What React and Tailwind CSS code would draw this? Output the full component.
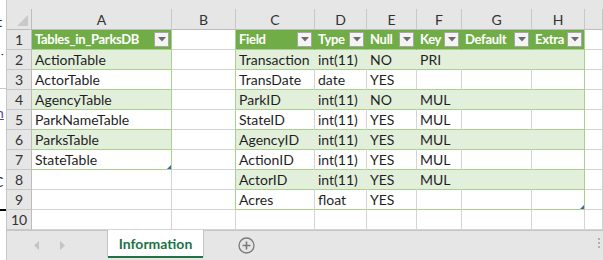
import React from "react";

const colLetters = ["A", "B", "C", "D", "E", "F", "G", "H", ""];

const tableA = ["Tables_in_ParksDB", "ActionTable", "ActorTable", "AgencyTable", "ParkNameTable", "ParksTable", "StateTable"];

const fields = [
  ["Field", "Type", "Null", "Key", "Default", "Extra"],
  ["Transaction", "int(11)", "NO", "PRI", "", ""],
  ["TransDate", "date", "YES", "", "", ""],
  ["ParkID", "int(11)", "NO", "MUL", "", ""],
  ["StateID", "int(11)", "YES", "MUL", "", ""],
  ["AgencyID", "int(11)", "YES", "MUL", "", ""],
  ["ActionID", "int(11)", "YES", "MUL", "", ""],
  ["ActorID", "int(11)", "YES", "MUL", "", ""],
  ["Acres", "float", "YES", "", "", ""],
];

function DropButton() {
  return (
    <span className="absolute right-[2px] top-[2px] z-20 flex h-[15px] w-[15px] items-center justify-center border border-[#a6a6a6] bg-[#f4f4f4]">
      <svg width="8" height="5" viewBox="0 0 8 5">
        <path d="M0 0 L8 0 L4 4.5 Z" fill="#6b6b6b" />
      </svg>
    </span>
  );
}

function Handle() {
  return (
    <svg className="absolute bottom-0 right-0" width="4" height="4" viewBox="0 0 4 4">
      <path d="M4 0 L4 4 L0 4 Z" fill="#4660b8" />
    </svg>
  );
}

function getCell(r, c) {
  // r: 1..10, c: 0..8
  const inA = c === 0 && r <= 7;
  const inC = c >= 2 && c <= 7 && r <= 9;
  const inTable = inA || inC;
  const header = inTable && r === 1;
  const band = inTable && r > 1 && r % 2 === 0;

  let text = "";
  if (inA) text = tableA[r - 1];
  if (inC) text = fields[r - 1][c - 2];

  let bg = "bg-white";
  if (header) bg = "bg-[#70ad47]";
  else if (band) bg = "bg-[#e2efda]";

  let bb = "border-b-[#d4d4d4]";
  if (inTable) bb = "border-b-[#a9d08e]";

  let br = "border-r-[#d4d4d4]";
  if ((c === 0 && r <= 7) || (c === 1 && r <= 9) || (c === 7 && r <= 9)) br = "border-r-[#a9d08e]";
  else if (header) br = "border-r-[#70ad47]";
  else if (band) br = "border-r-[#e2efda]";

  const handle = (c === 0 && r === 7) || (c === 7 && r === 9);

  return { text, header, cls: `${bg} ${bb} ${br}`, handle };
}

export default function App() {
  const rows = [1, 2, 3, 4, 5, 6, 7, 8, 9, 10];
  return (
    <div
      className="flex h-[260px] w-[603px] overflow-hidden bg-white text-[14px] text-[#1f1f1f]"
      style={{ fontFamily: "Lato, 'Liberation Sans', sans-serif" }}
    >
      {/* sliver of the window behind */}
      <div className="relative w-[6px] shrink-0 bg-white">
        <span className="absolute left-[-3px] top-[15px] text-[14px] leading-none text-[#222]">t</span>
        <span className="absolute left-[1px] top-[48px] text-[10px] leading-none text-[#222]">·</span>
        <div className="absolute left-0 top-[88px] h-px w-[6px] bg-[#c8c8c8]" />
        <span className="absolute left-[-4px] top-[106px] text-[14px] leading-none text-[#5b3f9e] underline">h</span>
        <span className="absolute left-[-6px] top-[175px] text-[14px] leading-none text-[#222]">C</span>
        <div className="absolute left-0 top-[209px] h-[2px] w-[6px] bg-black" />
      </div>

      <div className="flex min-w-0 flex-1 flex-col border-l border-[#c6c6c6] bg-[#e6e6e6]">
        <div className="h-[9px] shrink-0 bg-[#e6e6e6]" />
        <div className="grid grid-cols-[25px_140px_64px_79px_52px_50px_45px_70px_53px_1fr]">
          {/* column headers */}
          <div className="relative h-[21px] border-b border-r border-[#bcbcbc] bg-[#e6e6e6]">
            <svg className="absolute bottom-[3px] right-[3px]" width="11" height="11" viewBox="0 0 11 11">
              <path d="M11 0 L11 11 L0 11 Z" fill="#c9c9c9" />
            </svg>
          </div>
          {colLetters.map((l, i) => (
            <div
              key={"h" + i}
              className="flex h-[21px] items-center justify-center border-b border-r border-b-[#bcbcbc] border-r-[#c8c8c8] bg-[#e6e6e6] text-[14px] text-[#333]"
            >
              {l}
            </div>
          ))}

          {rows.map((r) => (
            <React.Fragment key={r}>
              <div className="flex h-[20px] items-center justify-center border-b border-r border-b-[#c8c8c8] border-r-[#bcbcbc] bg-[#e6e6e6] text-[14px] text-[#333]">
                {r}
              </div>
              {colLetters.map((_, c) => {
                const cell = getCell(r, c);
                return (
                  <div
                    key={r + "-" + c}
                    className={`relative flex h-[20px] items-center overflow-visible whitespace-nowrap border-b border-r pl-[3px] ${cell.cls} ${
                      cell.header ? "text-[13px] font-bold tracking-[-0.3px] text-white" : ""
                    }`}
                  >
                    <span className="relative z-10">{cell.text}</span>
                    {cell.header && <DropButton />}
                    {cell.handle && <Handle />}
                  </div>
                );
              })}
            </React.Fragment>
          ))}
        </div>

        {/* sheet tabs */}
        <div className="flex h-[30px] shrink-0 items-start border-t border-[#c6c6c6] bg-[#e6e6e6]">
          <div className="flex h-[28px] w-[100px] items-center gap-[20px] pl-[27px]">
            <svg width="6" height="9" viewBox="0 0 6 9">
              <path d="M5 0 L5 9 L0 4.5 Z" fill="#c4c4c4" />
            </svg>
            <svg width="6" height="9" viewBox="0 0 6 9">
              <path d="M0 0 L0 9 L5 4.5 Z" fill="#c4c4c4" />
            </svg>
          </div>
          <div className="relative -mt-px flex h-[27px] w-[97px] items-center justify-center border-x border-[#c6c6c6] bg-white text-[14px] font-bold text-[#217346]">
            Information
            <div className="absolute bottom-[-1px] left-0 right-0 h-[2px] bg-[#217346]" />
          </div>
          <div className="flex h-[28px] w-[84px] items-center justify-center">
            <svg width="17" height="17" viewBox="0 0 17 17">
              <circle cx="8.5" cy="8.5" r="7.5" fill="none" stroke="#7a7a7a" strokeWidth="1.3" />
              <path d="M8.5 4.5 V12.5 M4.5 8.5 H12.5" stroke="#7a7a7a" strokeWidth="1.6" />
            </svg>
          </div>
          <div className="ml-auto mr-[3px] mt-[7px] flex flex-col gap-[2px]">
            <span className="h-[2px] w-[2px] bg-[#b0b0b0]" />
            <span className="h-[2px] w-[2px] bg-[#b0b0b0]" />
            <span className="h-[2px] w-[2px] bg-[#b0b0b0]" />
          </div>
        </div>
      </div>
    </div>
  );
}
